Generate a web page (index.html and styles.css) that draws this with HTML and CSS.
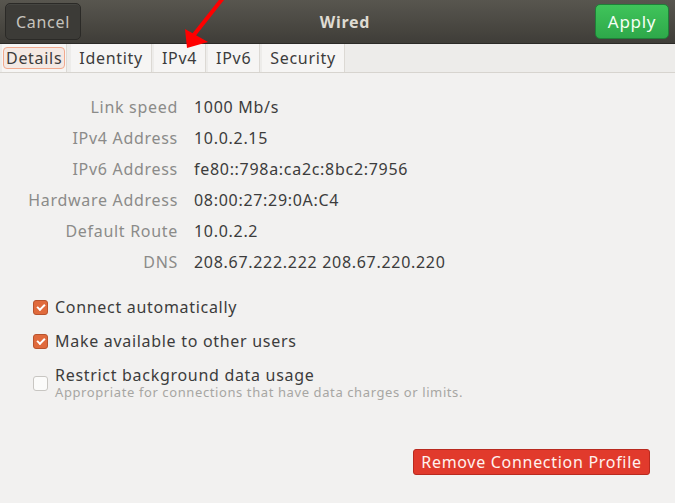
FILE: index.html
```html
<!DOCTYPE html>
<html lang="en">
<head>
    <meta charset="utf-8">
    <title>Wired</title>
    <link rel="stylesheet" href="styles.css">
</head>
<body>
<div class="dialog">
    <div class="headerbar">
        <button class="btn cancel">Cancel</button>
        <div class="title">Wired</div>
        <button class="btn apply">Apply</button>
    </div>

    <div class="tabs">
        <div class="tab active"><span>Details</span></div>
        <div class="tab">Identity</div>
        <div class="tab">IPv4</div>
        <div class="tab">IPv6</div>
        <div class="tab">Security</div>
    </div>

    <div class="content">
        <div class="info">
            <div class="label">Link speed</div><div class="value">1000 Mb/s</div>
            <div class="label">IPv4 Address</div><div class="value">10.0.2.15</div>
            <div class="label">IPv6 Address</div><div class="value">fe80::798a:ca2c:8bc2:7956</div>
            <div class="label">Hardware Address</div><div class="value">08:00:27:29:0A:C4</div>
            <div class="label">Default Route</div><div class="value">10.0.2.2</div>
            <div class="label">DNS</div><div class="value">208.67.222.222 208.67.220.220</div>
        </div>

        <div class="checks">
            <label class="check"><span class="box checked"></span>Connect automatically</label>
            <label class="check"><span class="box checked"></span>Make available to other users</label>
            <label class="check top">
                <span class="box"></span>
                <span class="text">Restrict background data usage
                    <small>Appropriate for connections that have data charges or limits.</small>
                </span>
            </label>
        </div>

        <div class="actions">
            <button class="btn remove">Remove Connection Profile</button>
        </div>
    </div>

    <!-- annotation arrow pointing at the IPv4 tab -->
    <svg class="arrow" width="60" height="52" viewBox="0 0 60 52">
        <line x1="42" y1="-2" x2="12" y2="36" stroke="#ff0000" stroke-width="4"/>
        <polygon points="6,48 4,29 27,42" fill="#ff0000"/>
    </svg>
</div>
</body>
</html>
```

FILE: styles.css
```css
body {
    margin: 0;
    font-family: "Noto Sans", "Open Sans", sans-serif;
    letter-spacing: 0.7px;
    background: #f2f1f0;
}

.dialog {
    position: relative;
    width: 675px;
    height: 503px;
    background: #f2f1f0;
    overflow: hidden;
}

.headerbar {
    height: 44px;
    display: flex;
    align-items: center;
    justify-content: space-between;
    padding: 0 6px 0 5px;
    box-sizing: border-box;
    background: linear-gradient(#58564f, #3f3d38);
    border-bottom: 1px solid #2b2a27;
}

.title {
    color: #dfdbd2;
    font-weight: bold;
    font-size: 16px;
    margin-left: 14px;
}

.btn {
    font-family: inherit;
    font-size: 16px;
    letter-spacing: 0.7px;
    border-radius: 5px;
    cursor: pointer;
}

.cancel {
    width: 76px;
    height: 37px;
    padding: 0;
    color: #c6c3bd;
    background: #3c3b37;
    border: 1px solid #2b2a27;
    box-shadow: inset 0 1px rgba(255, 255, 255, 0.05);
}

.apply {
    width: 74px;
    height: 35px;
    padding: 0;
    color: #f4fff4;
    font-size: 17px;
    background: linear-gradient(#3fc45a, #2ea84a);
    border: 1px solid #1f8038;
}

.tabs {
    display: flex;
    height: 28px;
    padding-left: 2px;
    background: #edecea;
    border-bottom: 1px solid #d7d4cf;
}

.tab {
    display: flex;
    align-items: center;
    padding: 0 8px;
    margin-right: 2px;
    font-size: 16px;
    color: #3c3c3c;
    background: #f6f5f4;
    border-right: 1px solid #dcd9d4;
}

.tab.active {
    padding: 0 1px;
    margin-right: 4px;
}

.tab.active span {
    padding: 0 2px;
    line-height: 20px;
    border: 1px solid #f2aa8e;
    border-radius: 4px;
    background: #f4e9e4;
}

.content {
    padding: 23px 0 0 24px;
}

.info {
    display: grid;
    grid-template-columns: 154px auto;
    column-gap: 16px;
    row-gap: 9px;
    font-size: 16px;
    line-height: 22px;
}

.label {
    text-align: right;
    color: #8b8b89;
}

.value {
    color: #3c3c3c;
}

.checks {
    margin-top: 23px;
    padding-left: 9px;
    display: flex;
    flex-direction: column;
    gap: 12px;
    font-size: 16px;
    color: #3c3c3c;
}

.check {
    display: flex;
    align-items: center;
    gap: 7px;
    line-height: 22px;
}

.check.top {
    align-items: flex-start;
    margin-top: 2px;
}

.check.top .box {
    margin-top: 10px;
}

.text {
    line-height: 18px;
}

.box {
    width: 13px;
    height: 13px;
    border-radius: 3px;
    border: 1px solid #c8c6c2;
    background: #fbfbfa;
    flex-shrink: 0;
    position: relative;
}

.box.checked {
    background: #e06a3c;
    border-color: #b8532d;
}

.box.checked::after {
    content: "";
    position: absolute;
    left: 3px;
    top: 1px;
    width: 6px;
    height: 3px;
    border-left: 2px solid #fff;
    border-bottom: 2px solid #fff;
    transform: translate(0, 2px) rotate(-45deg);
}

.text small {
    display: block;
    margin-top: 2px;
    font-size: 13px;
    line-height: 13px;
    letter-spacing: 0.6px;
    color: #a7a6a3;
}

.actions {
    display: flex;
    justify-content: flex-end;
    padding-right: 25px;
    margin-top: 50px;
}

.remove {
    width: 237px;
    height: 26px;
    padding: 0;
    color: #fff2ef;
    border-radius: 3px;
    background: #e13a2c;
    border: 1px solid #b92a1f;
}

.arrow {
    position: absolute;
    left: 181px;
    top: 0;
}
```
